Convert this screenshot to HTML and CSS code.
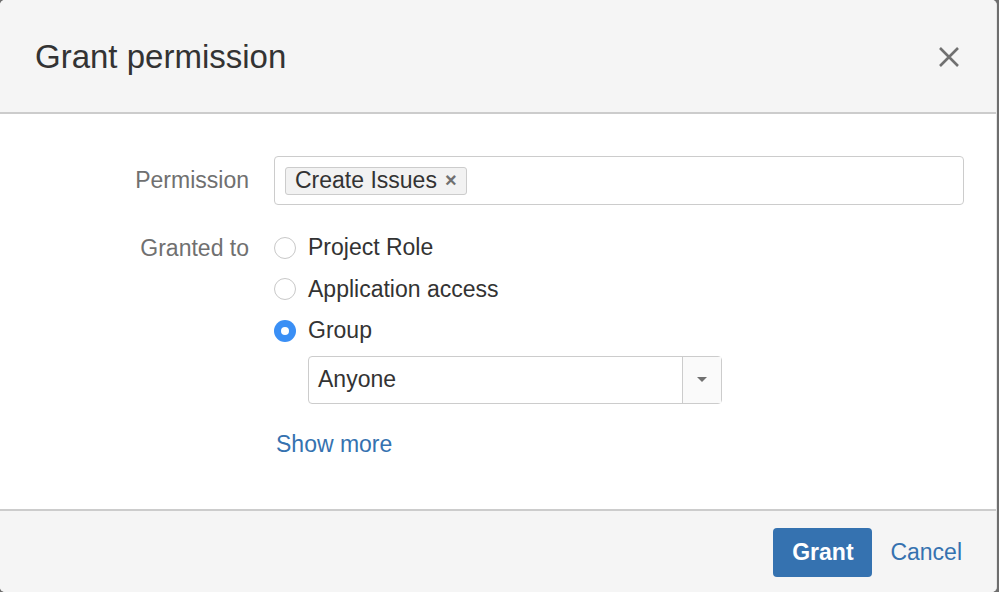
FILE: index.html
```html
<!DOCTYPE html>
<html>
<head>
<meta charset="utf-8">
<link rel="stylesheet" href="styles.css">
</head>
<body>
<div class="dialog">
  <header class="dlg-header">
    <h1 class="dlg-title">Grant permission</h1>
    <button class="dlg-close" aria-label="Close">
      <svg width="22" height="22" viewBox="0 0 22 22"><path d="M2 2 L20 20 M20 2 L2 20" stroke="#707070" stroke-width="2.6" fill="none"/></svg>
    </button>
  </header>
  <main class="dlg-body">
    <div class="form">
      <div class="label label-perm">Permission</div>
      <div class="field">
        <div class="multi-input">
          <span class="tag">Create Issues <span class="tag-x">×</span></span>
        </div>
      </div>
      <div class="label label-granted">Granted to</div>
      <div class="field radios">
        <div class="radio-row"><span class="radio"></span><span>Project Role</span></div>
        <div class="radio-row"><span class="radio"></span><span>Application access</span></div>
        <div class="radio-row"><span class="radio checked"></span><span>Group</span></div>
        <div class="select">
          <span class="select-text">Anyone</span>
          <span class="select-btn"><span class="caret"></span></span>
        </div>
        <a class="show-more">Show more</a>
      </div>
    </div>
  </main>
  <footer class="dlg-footer">
    <button class="btn-primary">Grant</button>
    <a class="cancel">Cancel</a>
  </footer>
</div>
</body>
</html>
```
FILE: styles.css
```css
html, body {
  margin: 0;
  padding: 0;
}
body {
  background: #6e6e6e;
  width: 999px;
  height: 592px;
  overflow: hidden;
  font-family: "Liberation Sans", Arial, sans-serif;
  color: #333;
}
.dialog {
  width: 996px;
  height: 592px;
  background: #fff;
  border-radius: 5px;
  border-right: 1px solid #e6e6e6;
  display: flex;
  flex-direction: column;
  overflow: hidden;
}
.dlg-header {
  flex: none;
  background: #f5f5f5;
  border-bottom: 2px solid #cccccc;
  display: flex;
  align-items: center;
  justify-content: space-between;
  padding: 0 36px 0 35px;
  box-sizing: border-box;
  height: 114px;
}
.dlg-title {
  margin: 0;
  font-weight: normal;
  font-size: 33px;
  color: #333;
  padding-top: 1px;
}
.dlg-close {
  border: 0;
  background: transparent;
  padding: 0;
  width: 22px;
  height: 22px;
  display: flex;
  margin-top: 1px;
}
.dlg-body {
  flex: 1;
  padding-top: 42px;
}
.form {
  display: grid;
  grid-template-columns: 249px 690px;
  column-gap: 25px;
  row-gap: 21px;
  align-items: start;
}
.label {
  text-align: right;
  font-size: 23px;
  color: #707070;
}
.label-perm {
  line-height: 49px;
}
.label-granted {
  line-height: 44px;
}
.multi-input {
  height: 49px;
  box-sizing: border-box;
  border: 1px solid #cccccc;
  border-radius: 4px;
  display: flex;
  align-items: center;
  padding-left: 10px;
}
.tag {
  display: inline-flex;
  align-items: center;
  height: 28px;
  box-sizing: border-box;
  border: 1px solid #cccccc;
  border-radius: 3px;
  background: #f2f2f2;
  padding: 0 9px 0 9px;
  font-size: 23px;
  color: #333;
  gap: 8px;
}
.tag-x {
  color: #707070;
  font-weight: bold;
  font-size: 20px;
}
.radios {
  display: flex;
  flex-direction: column;
  font-size: 23px;
  color: #333;
  padding-top: 1px;
}
.radio-row {
  height: 41.5px;
  display: flex;
  align-items: center;
  gap: 12px;
}
.radio {
  width: 22px;
  height: 22px;
  box-sizing: border-box;
  border: 1px solid #c8c8c8;
  border-radius: 50%;
  background: #fff;
  flex: none;
}
.radio.checked {
  border: 0;
  background: #3a8ff5;
  display: flex;
  align-items: center;
  justify-content: center;
}
.radio.checked::after {
  content: "";
  width: 8px;
  height: 8px;
  border-radius: 50%;
  background: #fff;
}
.select {
  margin-top: 4px;
  margin-left: 34px;
  width: 414px;
  height: 48px;
  box-sizing: border-box;
  border: 1px solid #cccccc;
  border-radius: 4px;
  display: flex;
  align-items: center;
}
.select-text {
  flex: 1;
  padding-left: 9px;
  font-size: 23px;
  color: #333;
}
.select-btn {
  width: 38px;
  height: 100%;
  border-left: 1px solid #cccccc;
  background: #fafafa;
  display: flex;
  align-items: center;
  justify-content: center;
}
.caret {
  width: 0;
  height: 0;
  border-left: 5px solid transparent;
  border-right: 5px solid transparent;
  border-top: 5px solid #707070;
}
.show-more {
  margin-top: 19px;
  margin-left: 2px;
  font-size: 23px;
  color: #3572b0;
  line-height: 42px;
}
.dlg-footer {
  height: 83px;
  flex: none;
  box-sizing: border-box;
  background: #f5f5f5;
  border-top: 2px solid #cccccc;
  display: flex;
  align-items: center;
  justify-content: flex-end;
  padding: 2px 34px 0 0;
  gap: 18px;
}
.btn-primary {
  width: 99px;
  height: 49px;
  border: 0;
  border-radius: 4px;
  background: #3572b0;
  color: #fff;
  font-family: "Liberation Sans", Arial, sans-serif;
  font-weight: bold;
  font-size: 23px;
  padding: 0;
}
.cancel {
  font-size: 23px;
  color: #3572b0;
}
```
